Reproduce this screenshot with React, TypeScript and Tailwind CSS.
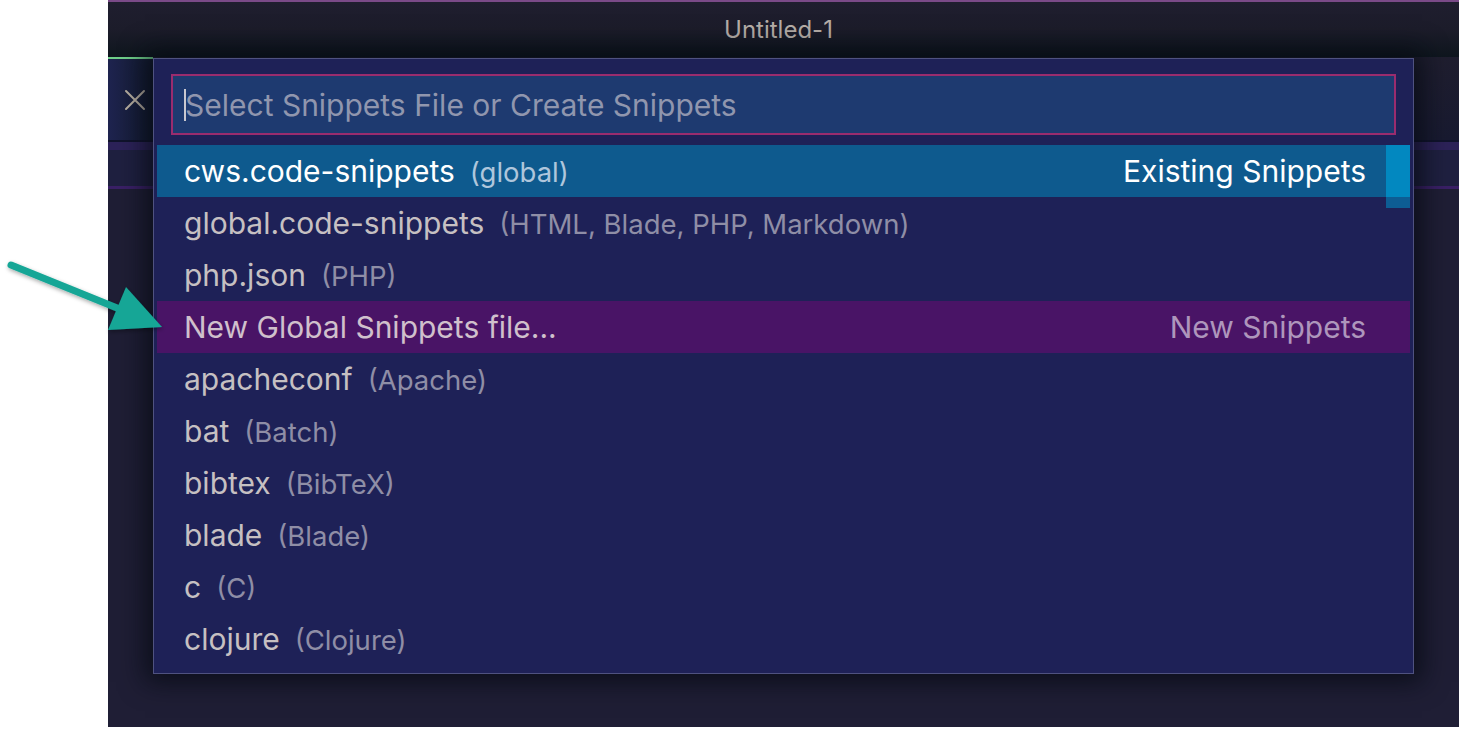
import React from "react";

type Row = { label: string; desc?: string; right?: string; kind?: "sel" | "new" };

const rows: Row[] = [
  { label: "cws.code-snippets", desc: "(global)", right: "Existing Snippets", kind: "sel" },
  { label: "global.code-snippets", desc: "(HTML, Blade, PHP, Markdown)" },
  { label: "php.json", desc: "(PHP)" },
  { label: "New Global Snippets file...", right: "New Snippets", kind: "new" },
  { label: "apacheconf", desc: "(Apache)" },
  { label: "bat", desc: "(Batch)" },
  { label: "bibtex", desc: "(BibTeX)" },
  { label: "blade", desc: "(Blade)" },
  { label: "c", desc: "(C)" },
  { label: "clojure", desc: "(Clojure)" },
];

function ListRow({ r }: { r: Row }) {
  const bg = r.kind === "sel" ? "bg-[#0e5a8e]" : r.kind === "new" ? "bg-[#491466]" : "";
  const labelColor = r.kind === "sel" ? "text-white" : r.kind === "new" ? "text-[#d0c0cc]" : "text-[#c6c0c2]";
  const descColor = r.kind === "sel" ? "text-[#afc6dc]" : "text-[#8f8ea6]";
  const rightColor = r.kind === "sel" ? "text-white" : "text-[#ae96bc]";
  return (
    <div className={`h-[52px] flex items-center pl-[27px] pr-[44px] ${bg}`}>
      <div className="flex-1 flex items-baseline">
        <span className={`text-[30px] leading-[36px] ${labelColor}`}>{r.label}</span>
        {r.desc && <span className={`ml-[15px] text-[27.5px] leading-[36px] ${descColor}`}>{r.desc}</span>}
        <span className="flex-1" />
        {r.right && <span className={`text-[30px] leading-[36px] ${rightColor}`}>{r.right}</span>}
      </div>
    </div>
  );
}

export default function App() {
  return (
    <div className="relative w-[1459px] h-[729px] bg-white overflow-hidden font-['Inter','Noto_Sans',sans-serif] flex">
      <div className="w-[108px] shrink-0" />
      <div className="flex-1 h-[727px] flex flex-col bg-[#1f1e34]">
        {/* title bar */}
        <div className="h-[57px] border-t-2 border-[#7a4a88] bg-gradient-to-b from-[#1f1e2f] via-[#1c1c2a] to-[#0e161e] flex items-center justify-center pr-[10px]">
          <span className="text-[24px] text-[#b6aea8]">Untitled-1</span>
        </div>
        {/* tab row */}
        <div className="h-[83px] flex bg-[#1e1f48]">
          <div className="w-[45px] h-full bg-gradient-to-r from-[#1f2450] to-[#121a2e] border-t-2 border-[#6fd08a] flex items-center justify-center">
            <svg width="24" height="24" viewBox="0 0 24 24" className="ml-[8px]">
              <path d="M3 3 L21 21 M21 3 L3 21" stroke="#b9b0a2" strokeWidth="2" strokeLinecap="round" />
            </svg>
          </div>
          <div className="flex-1 bg-gradient-to-b from-[#1f1e2f] to-[#181a30]" />
        </div>
        <div className="h-[2px] bg-[#10132c]" />
        <div className="h-[8px] bg-[#2c2258]" />
        <div className="h-[36px] bg-[#1f2040]" />
        <div className="h-[3px] bg-[#3a2066]" />
        <div className="flex-1 bg-[#1f1e35]" />
      </div>

      {/* quick pick palette */}
      <div className="absolute left-[153px] top-[58px] w-[1261px] h-[616px] bg-[#1e2157] border border-[#4f5280] shadow-[0_0_24px_8px_rgba(5,10,18,0.75)]">
        <div className="pt-[15px] pl-[17px] pr-[17px]">
          <div className="h-[61px] border-2 border-[#9a2c6e] bg-[#1e3a70] flex items-center pl-[11px]">
            <div className="w-[2px] h-[32px] bg-[#c8c8d0] mr-[-1px]" />
            <span className="text-[30px] leading-none text-[#9096ae]">Select Snippets File or Create Snippets</span>
          </div>
        </div>
        <div className="relative mt-[10px] ml-[3px] mr-[3px]">
          {rows.map((r, i) => (
            <ListRow key={i} r={r} />
          ))}
          <div className="absolute right-[0px] top-0 w-[24px] flex flex-col">
            <div className="h-[52px] bg-[#0288c0]" />
            <div className="h-[11px] bg-[#0d5d94]" />
          </div>
        </div>
      </div>

      {/* annotation arrow */}
      <svg className="absolute left-0 top-[240px]" width="200" height="120" viewBox="0 240 200 120">
        <defs>
          <filter id="sh" x="-20%" y="-20%" width="140%" height="140%">
            <feDropShadow dx="1" dy="2" stdDeviation="2" floodColor="#000" floodOpacity="0.35" />
          </filter>
        </defs>
        <g filter="url(#sh)">
          <line x1="11" y1="265" x2="122" y2="310" stroke="#15a696" strokeWidth="7" strokeLinecap="round" />
          <polygon points="162,327 108,330 126,287" fill="#15a696" />
        </g>
      </svg>
    </div>
  );
}
